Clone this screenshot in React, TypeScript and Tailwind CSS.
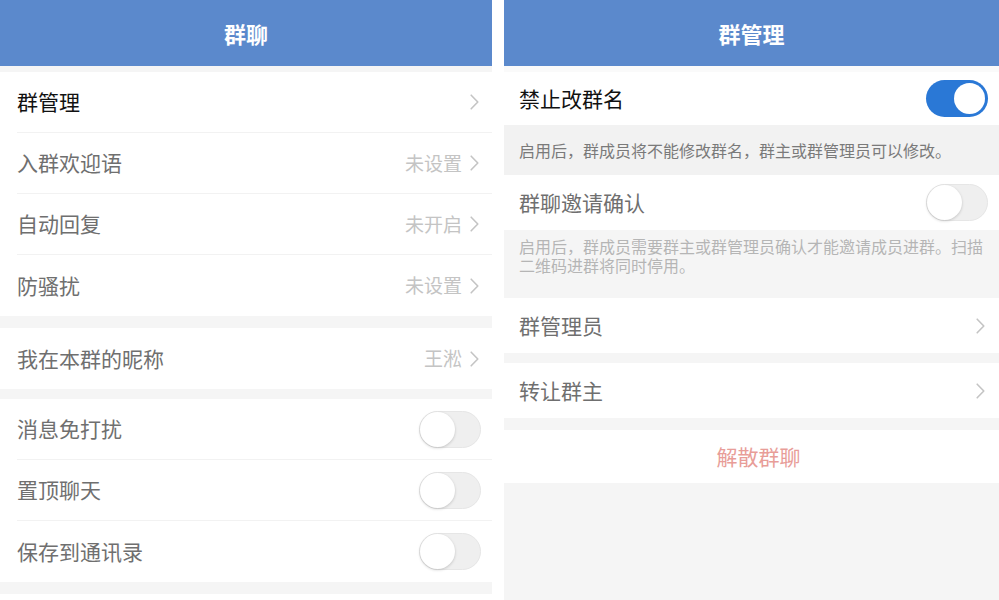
const font = { fontFamily: '"Noto Sans CJK SC", "Noto Sans", sans-serif' };

function Chevron() {
  return (
    <svg width="9" height="16" viewBox="0 0 9 16" className="text-[#c4c4c4]">
      <polyline points="1.2,1.2 7.8,8 1.2,14.8" fill="none" stroke="currentColor" strokeWidth="1.6" strokeLinecap="round" strokeLinejoin="round" />
    </svg>
  );
}

function Toggle({ on }: { on?: boolean }) {
  if (on) {
    return (
      <div className="w-[62px] h-[37px] rounded-full bg-[#2a78d6] flex items-center justify-end px-[3px]">
        <div className="w-[31px] h-[31px] rounded-full bg-white" />
      </div>
    );
  }
  return (
    <div className="w-[62px] h-[37px] rounded-full bg-[#efefef] border border-[#e6e6e6] flex items-center">
      <div className="w-[35px] h-[35px] rounded-full bg-white shadow-[0_1px_3px_rgba(0,0,0,0.18)]" />
    </div>
  );
}

function Row({
  label,
  value,
  dark,
  chevron,
  toggle,
  divider,
}: {
  label: string;
  value?: string;
  dark?: boolean;
  chevron?: boolean;
  toggle?: boolean;
  divider?: boolean;
}) {
  return (
    <div className="bg-white pl-[17px]">
      <div
        className={`h-[61px] flex items-center justify-between ${toggle ? "pr-[11px]" : "pr-[13px]"} ${
          divider ? "border-b border-[#f2f2f2]" : ""
        }`}
      >
        <span className={`text-[21px] ${dark ? "text-[#111]" : "text-[#6f6f6f]"}`}>{label}</span>
        <div className="flex items-center gap-[8px]">
          {value && <span className="text-[19px] text-[#c4c4c4]">{value}</span>}
          {chevron && <Chevron />}
          {toggle && <Toggle />}
        </div>
      </div>
    </div>
  );
}

function LeftPanel() {
  return (
    <div className="w-[492px] h-full bg-[#f5f5f5] flex flex-col shadow-[2px_0_8px_rgba(0,0,0,0.05)]">
      <div className="h-[66px] bg-[#5b89cc] flex items-center justify-center">
        <span className="text-white text-[22px] font-bold">群聊</span>
      </div>
      <div className="h-[6px]" />
      <Row label="群管理" dark chevron divider />
      <Row label="入群欢迎语" value="未设置" chevron divider />
      <Row label="自动回复" value="未开启" chevron divider />
      <Row label="防骚扰" value="未设置" chevron />
      <div className="h-[12px]" />
      <Row label="我在本群的昵称" value="王淞" chevron />
      <div className="h-[10px]" />
      <Row label="消息免打扰" toggle divider />
      <Row label="置顶聊天" toggle divider />
      <Row label="保存到通讯录" toggle />
      <div className="h-[12px]" />
      <div className="flex-1 bg-white" />
    </div>
  );
}

function RightPanel() {
  return (
    <div className="flex-1 h-full bg-[#f5f5f5] flex flex-col">
      <div className="h-[66px] bg-[#5b89cc] flex items-center justify-center">
        <span className="text-white text-[22px] font-bold">群管理</span>
      </div>
      <div className="h-[6px] bg-[#fafafa]" />
      <div className="bg-white h-[53px] flex items-center justify-between pl-[15px] pr-[11px]">
        <span className="text-[21px] text-[#111]">禁止改群名</span>
        <Toggle on />
      </div>
      <div className="h-[50px] bg-[#f2f2f2] flex items-center px-[15px]">
        <span className="text-[16px] text-[#7a7a7a]">启用后，群成员将不能修改群名，群主或群管理员可以修改。</span>
      </div>
      <div className="bg-white h-[55px] flex items-center justify-between pl-[15px] pr-[11px]">
        <span className="text-[21px] text-[#6f6f6f]">群聊邀请确认</span>
        <Toggle />
      </div>
      <div className="h-[68px] bg-[#f5f5f5] pl-[15px] pr-[8px] pt-[7px]">
        <p className="text-[16px] leading-[19px] text-[#b5b5b5]">
          启用后，群成员需要群主或群管理员确认才能邀请成员进群。扫描二维码进群将同时停用。
        </p>
      </div>
      <div className="bg-white h-[55px] flex items-center justify-between pl-[15px] pr-[14px]">
        <span className="text-[21px] text-[#6f6f6f]">群管理员</span>
        <Chevron />
      </div>
      <div className="h-[10px]" />
      <div className="bg-white h-[55px] flex items-center justify-between pl-[15px] pr-[14px]">
        <span className="text-[21px] text-[#6f6f6f]">转让群主</span>
        <Chevron />
      </div>
      <div className="h-[12px]" />
      <div className="bg-white h-[53px] flex items-center justify-center pl-[14px]">
        <span className="text-[21px] text-[#e89d98]">解散群聊</span>
      </div>
      <div className="flex-1" />
    </div>
  );
}

export default function App() {
  return (
    <div className="w-[999px] h-[600px] bg-white flex overflow-hidden" style={font}>
      <LeftPanel />
      <div className="w-[12px] h-full bg-white" />
      <RightPanel />
    </div>
  );
}
